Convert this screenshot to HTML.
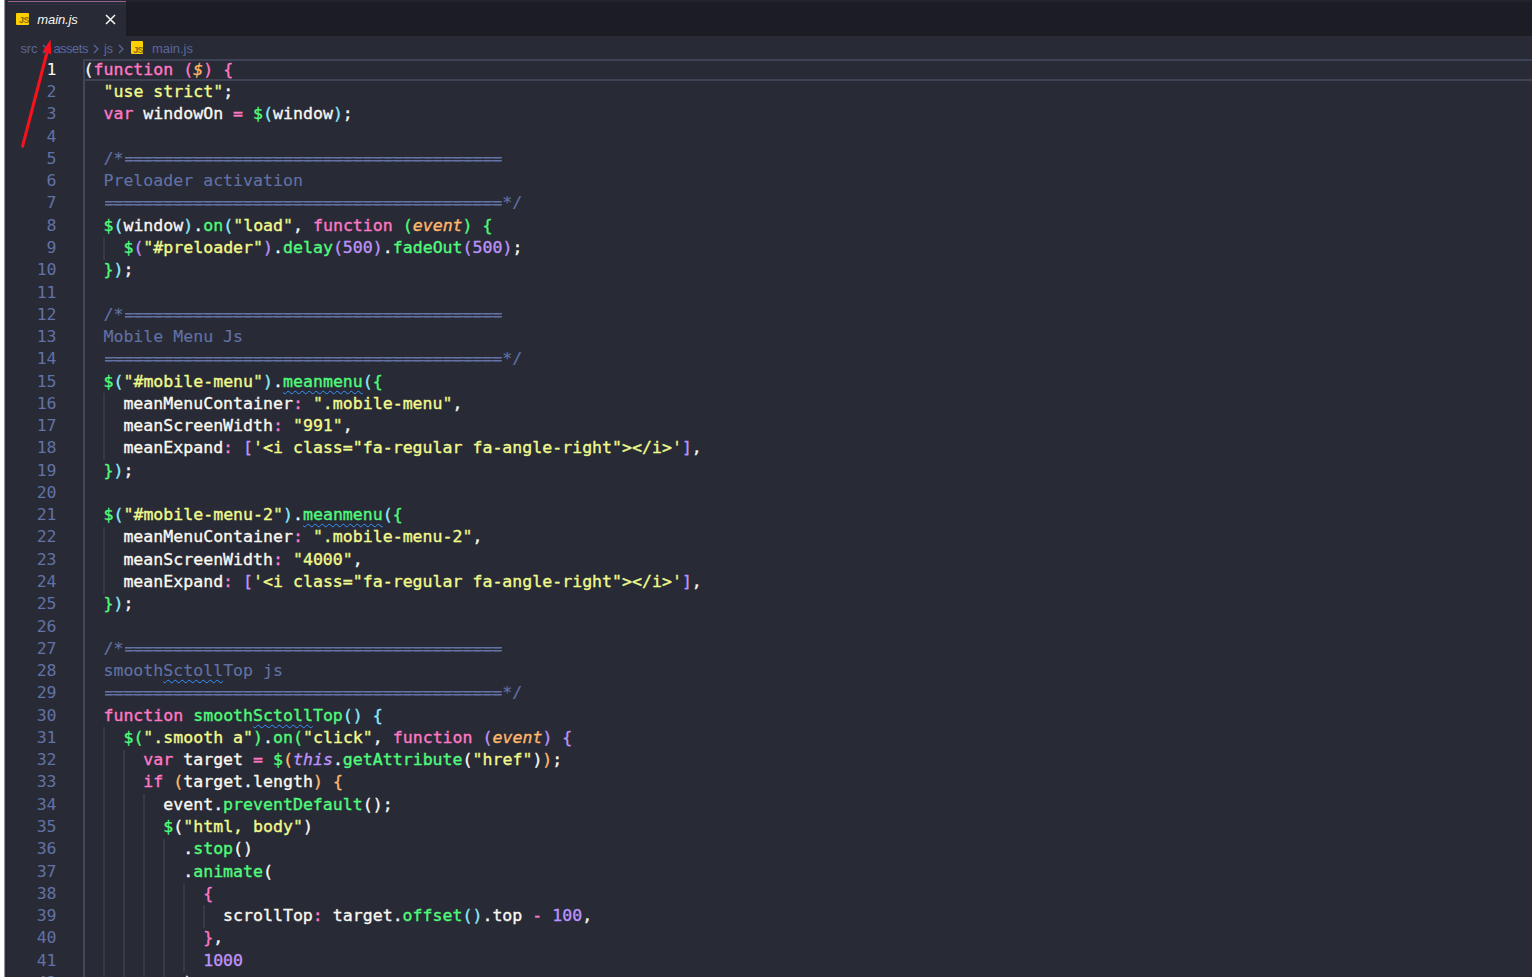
<!DOCTYPE html>
<html lang="en"><head><meta charset="utf-8"><title>main.js</title>
<style>
html,body{margin:0;padding:0}
body{width:1532px;height:977px;overflow:hidden;background:#282a36;position:relative;font-family:"Liberation Sans",sans-serif}
.edge{position:absolute;left:0;top:0;width:4px;height:977px;background:#fff}
.edge2{position:absolute;left:4px;top:0;width:3px;height:977px;background:linear-gradient(90deg,#8d8d95 0 1px,#393941 1px 2px,#22222c 2px 3px)}
.tabs{position:absolute;left:8px;top:0;right:0;height:35.5px;background:#1b1c24}
.tabs:before{content:"";position:absolute;left:0;right:0;top:0;height:3px;background:linear-gradient(#24252f,#1b1c24)}
.tab{position:absolute;left:0;top:0;width:118px;height:35.5px;background:#282a36}
.tab .tl{position:absolute;left:0;right:0;top:0;height:6.2px;background:linear-gradient(#1f2530 0,#222e38 30%,#222e38 80%,#282a36 100%)}
.tab .bt{position:absolute;left:0;right:0;top:0.9px;height:1.3px;background:#a0608a}
.tab .bt2{position:absolute;left:0;right:0;top:3.8px;height:1.2px;background:#3c2a44}
.tab .lbl{position:absolute;left:29.3px;top:11.7px;font-size:13px;line-height:16px;font-style:italic;color:#f8f8f2;letter-spacing:-0.1px}
.jsico{position:absolute;background:#fbd100;border-radius:1px;overflow:hidden}
.jsico span{position:absolute;right:0.3px;bottom:0.2px;font:bold 9px/9px "Liberation Sans",sans-serif;color:#8a6a10;letter-spacing:-0.6px}
.close{position:absolute;left:97px;top:13.6px;width:11px;height:11px}
.crumbs{position:absolute;left:0;top:35.5px;width:1532px;height:23.5px;color:#5a679c;font-size:13px;line-height:16px}
.crumbs span{position:absolute;top:5.2px;white-space:pre}
.crumbs svg{position:absolute}
.ln{position:absolute;left:8px;width:48.6px;text-align:right;color:#6272a4;font:16.57px/22.27px "DejaVu Sans Mono","Liberation Mono",monospace;height:22.27px;white-space:pre}
.ln.act{color:#f8f8f2}
.cl{position:absolute;left:83.5px;height:22.27px;white-space:pre;color:#f8f8f2;font:16.57px/22.27px "DejaVu Sans Mono","Liberation Mono",monospace;font-variant-ligatures:none;-webkit-text-stroke:0.35px}
.hl{position:absolute;left:83.2px;right:-4px;top:58.80px;height:22.42px;box-sizing:border-box;border:2px solid #3f4254}
.g{position:absolute;width:1.5px;background:#373947}
.g.a{background:#434559}
.k{color:#ff79c6}.f{color:#50fa7b}.n{color:#bd93f9}.c,.ceq{color:#6272a4}.c{-webkit-text-stroke:0.12px}.ceq{display:inline-block;clip-path:inset(0 0.5px 0 1.6px);text-shadow:1px 0 0 #6272a4,-1px 0 0 #6272a4;-webkit-text-stroke:0}
.p{color:#ffb86c;font-style:italic}.th{color:#bd93f9;font-style:italic}
.s{color:#f1fa8c}.q{color:#e9f284}
.b0{color:#f8f8f2}.b1{color:#ff79c6}.b2{color:#8be9fd}.b3{color:#50fa7b}.b4{color:#bd93f9}.b5{color:#ffb86c}
.sqg{text-decoration:underline wavy #3794ff;text-decoration-thickness:1.2px;text-underline-offset:3px;text-decoration-skip-ink:none}
</style></head><body>
<div class="edge"></div><div class="edge2"></div>
<div class="tabs"><div class="tab"><div class="tl"></div><div class="bt"></div><div class="bt2"></div>
<div class="jsico" style="left:8.2px;top:12.8px;width:13px;height:12.4px"><span>JS</span></div>
<div class="lbl">main.js</div>
<svg class="close" viewBox="0 0 11 11"><path d="M1 1L10 10M10 1L1 10" stroke="#f8f8f2" stroke-width="1.5" fill="none"/></svg>
</div></div>
<div class="crumbs">
<span style="left:20.5px;letter-spacing:-0.2px">src</span>
<svg style="left:42.4px;top:8.2px" width="6" height="10" viewBox="0 0 6 10"><path d="M1 1L5 5L1 9" stroke="#5a6698" stroke-width="1.3" fill="none"/></svg>
<span style="left:53.4px;letter-spacing:-0.5px">assets</span>
<svg style="left:92.9px;top:8.2px" width="6" height="10" viewBox="0 0 6 10"><path d="M1 1L5 5L1 9" stroke="#5a6698" stroke-width="1.3" fill="none"/></svg>
<span style="left:104px;letter-spacing:-0.3px">js</span>
<svg style="left:117.7px;top:8.2px" width="6" height="10" viewBox="0 0 6 10"><path d="M1 1L5 5L1 9" stroke="#5a6698" stroke-width="1.3" fill="none"/></svg>
<div class="jsico" style="left:131.3px;top:5px;width:12px;height:13.6px"><span>JS</span></div>
<span style="left:152px;letter-spacing:-0.05px">main.js</span>
</div>
<div class="hl"></div>

<div class="g a" style="left:83.40px;top:81.47px;height:913.07px"></div>
<div class="g" style="left:103.35px;top:237.36px;height:22.27px"></div>
<div class="g" style="left:103.35px;top:393.25px;height:66.81px"></div>
<div class="g" style="left:103.35px;top:526.87px;height:66.81px"></div>
<div class="g" style="left:103.35px;top:727.30px;height:267.24px"></div>
<div class="g" style="left:123.30px;top:749.57px;height:244.97px"></div>
<div class="g" style="left:143.26px;top:794.11px;height:200.43px"></div>
<div class="g" style="left:163.21px;top:838.65px;height:155.89px"></div>
<div class="g" style="left:183.16px;top:883.19px;height:89.08px"></div>
<div class="g" style="left:203.11px;top:905.46px;height:22.27px"></div>
<div class="ln act" style="top:58.80px">1</div>
<div class="cl" style="top:58.80px"><span class="b0">(</span><span class="k">function</span> <span class="b1">(</span><span class="p">$</span><span class="b1">)</span> <span class="b1">{</span></div>
<div class="ln" style="top:81.07px">2</div>
<div class="cl" style="top:81.07px">  <span class="q">"</span><span class="s">use strict</span><span class="q">"</span>;</div>
<div class="ln" style="top:103.34px">3</div>
<div class="cl" style="top:103.34px">  <span class="k">var</span> windowOn <span class="k">=</span> <span class="f">$</span><span class="b2">(</span>window<span class="b2">)</span>;</div>
<div class="ln" style="top:125.61px">4</div>
<div class="ln" style="top:147.88px">5</div>
<div class="cl" style="top:147.88px">  <span class="c">/*</span><span class="ceq">======================================</span></div>
<div class="ln" style="top:170.15px">6</div>
<div class="cl" style="top:170.15px">  <span class="c">Preloader activation</span></div>
<div class="ln" style="top:192.42px">7</div>
<div class="cl" style="top:192.42px">  <span class="ceq">========================================</span><span class="c">*/</span></div>
<div class="ln" style="top:214.69px">8</div>
<div class="cl" style="top:214.69px">  <span class="f">$</span><span class="b2">(</span>window<span class="b2">)</span>.<span class="f">on</span><span class="b2">(</span><span class="q">"</span><span class="s">load</span><span class="q">"</span>, <span class="k">function</span> <span class="b3">(</span><span class="p">event</span><span class="b3">)</span> <span class="b3">{</span></div>
<div class="ln" style="top:236.96px">9</div>
<div class="cl" style="top:236.96px">    <span class="f">$</span><span class="b4">(</span><span class="q">"</span><span class="s">#preloader</span><span class="q">"</span><span class="b4">)</span>.<span class="f">delay</span><span class="b4">(</span><span class="n">500</span><span class="b4">)</span>.<span class="f">fadeOut</span><span class="b4">(</span><span class="n">500</span><span class="b4">)</span>;</div>
<div class="ln" style="top:259.23px">10</div>
<div class="cl" style="top:259.23px">  <span class="b3">}</span><span class="b2">)</span>;</div>
<div class="ln" style="top:281.50px">11</div>
<div class="ln" style="top:303.77px">12</div>
<div class="cl" style="top:303.77px">  <span class="c">/*</span><span class="ceq">======================================</span></div>
<div class="ln" style="top:326.04px">13</div>
<div class="cl" style="top:326.04px">  <span class="c">Mobile Menu Js</span></div>
<div class="ln" style="top:348.31px">14</div>
<div class="cl" style="top:348.31px">  <span class="ceq">========================================</span><span class="c">*/</span></div>
<div class="ln" style="top:370.58px">15</div>
<div class="cl" style="top:370.58px">  <span class="f">$</span><span class="b2">(</span><span class="q">"</span><span class="s">#mobile-menu</span><span class="q">"</span><span class="b2">)</span>.<span class="f sqg">meanmenu</span><span class="b2">(</span><span class="b3">{</span></div>
<div class="ln" style="top:392.85px">16</div>
<div class="cl" style="top:392.85px">    meanMenuContainer<span class="k">:</span> <span class="q">"</span><span class="s">.mobile-menu</span><span class="q">"</span>,</div>
<div class="ln" style="top:415.12px">17</div>
<div class="cl" style="top:415.12px">    meanScreenWidth<span class="k">:</span> <span class="q">"</span><span class="s">991</span><span class="q">"</span>,</div>
<div class="ln" style="top:437.39px">18</div>
<div class="cl" style="top:437.39px">    meanExpand<span class="k">:</span> <span class="b4">[</span><span class="q">'</span><span class="s">&lt;i class="fa-regular fa-angle-right"&gt;&lt;/i&gt;</span><span class="q">'</span><span class="b4">]</span>,</div>
<div class="ln" style="top:459.66px">19</div>
<div class="cl" style="top:459.66px">  <span class="b3">}</span><span class="b2">)</span>;</div>
<div class="ln" style="top:481.93px">20</div>
<div class="ln" style="top:504.20px">21</div>
<div class="cl" style="top:504.20px">  <span class="f">$</span><span class="b2">(</span><span class="q">"</span><span class="s">#mobile-menu-2</span><span class="q">"</span><span class="b2">)</span>.<span class="f sqg">meanmenu</span><span class="b2">(</span><span class="b3">{</span></div>
<div class="ln" style="top:526.47px">22</div>
<div class="cl" style="top:526.47px">    meanMenuContainer<span class="k">:</span> <span class="q">"</span><span class="s">.mobile-menu-2</span><span class="q">"</span>,</div>
<div class="ln" style="top:548.74px">23</div>
<div class="cl" style="top:548.74px">    meanScreenWidth<span class="k">:</span> <span class="q">"</span><span class="s">4000</span><span class="q">"</span>,</div>
<div class="ln" style="top:571.01px">24</div>
<div class="cl" style="top:571.01px">    meanExpand<span class="k">:</span> <span class="b4">[</span><span class="q">'</span><span class="s">&lt;i class="fa-regular fa-angle-right"&gt;&lt;/i&gt;</span><span class="q">'</span><span class="b4">]</span>,</div>
<div class="ln" style="top:593.28px">25</div>
<div class="cl" style="top:593.28px">  <span class="b3">}</span><span class="b2">)</span>;</div>
<div class="ln" style="top:615.55px">26</div>
<div class="ln" style="top:637.82px">27</div>
<div class="cl" style="top:637.82px">  <span class="c">/*</span><span class="ceq">======================================</span></div>
<div class="ln" style="top:660.09px">28</div>
<div class="cl" style="top:660.09px">  <span class="c">smooth</span><span class="c sqg">Sctoll</span><span class="c">Top js</span></div>
<div class="ln" style="top:682.36px">29</div>
<div class="cl" style="top:682.36px">  <span class="ceq">========================================</span><span class="c">*/</span></div>
<div class="ln" style="top:704.63px">30</div>
<div class="cl" style="top:704.63px">  <span class="k">function</span> <span class="f">smooth</span><span class="f sqg">Sctoll</span><span class="f">Top</span><span class="b2">()</span> <span class="b2">{</span></div>
<div class="ln" style="top:726.90px">31</div>
<div class="cl" style="top:726.90px">    <span class="f">$</span><span class="b3">(</span><span class="q">"</span><span class="s">.smooth a</span><span class="q">"</span><span class="b3">)</span>.<span class="f">on</span><span class="b3">(</span><span class="q">"</span><span class="s">click</span><span class="q">"</span>, <span class="k">function</span> <span class="b4">(</span><span class="p">event</span><span class="b4">)</span> <span class="b4">{</span></div>
<div class="ln" style="top:749.17px">32</div>
<div class="cl" style="top:749.17px">      <span class="k">var</span> target <span class="k">=</span> <span class="f">$</span><span class="b5">(</span><span class="th">this</span>.<span class="f">getAttribute</span><span class="b0">(</span><span class="q">"</span><span class="s">href</span><span class="q">"</span><span class="b0">)</span><span class="b5">)</span>;</div>
<div class="ln" style="top:771.44px">33</div>
<div class="cl" style="top:771.44px">      <span class="k">if</span> <span class="b5">(</span>target.length<span class="b5">)</span> <span class="b5">{</span></div>
<div class="ln" style="top:793.71px">34</div>
<div class="cl" style="top:793.71px">        event.<span class="f">preventDefault</span><span class="b0">()</span>;</div>
<div class="ln" style="top:815.98px">35</div>
<div class="cl" style="top:815.98px">        <span class="f">$</span><span class="b0">(</span><span class="q">"</span><span class="s">html, body</span><span class="q">"</span><span class="b0">)</span></div>
<div class="ln" style="top:838.25px">36</div>
<div class="cl" style="top:838.25px">          .<span class="f">stop</span><span class="b0">()</span></div>
<div class="ln" style="top:860.52px">37</div>
<div class="cl" style="top:860.52px">          .<span class="f">animate</span><span class="b0">(</span></div>
<div class="ln" style="top:882.79px">38</div>
<div class="cl" style="top:882.79px">            <span class="b1">{</span></div>
<div class="ln" style="top:905.06px">39</div>
<div class="cl" style="top:905.06px">              scrollTop<span class="k">:</span> target.<span class="f">offset</span><span class="b2">()</span>.top <span class="k">-</span> <span class="n">100</span>,</div>
<div class="ln" style="top:927.33px">40</div>
<div class="cl" style="top:927.33px">            <span class="b1">}</span>,</div>
<div class="ln" style="top:949.60px">41</div>
<div class="cl" style="top:949.60px">            <span class="n">1000</span></div>
<div class="ln" style="top:971.87px">42</div>
<div class="cl" style="top:971.87px">          <span class="b0">)</span>;</div>
<svg style="position:absolute;left:0;top:0" width="80" height="160" viewBox="0 0 80 160"><path d="M22.6 146.2L47.4 51" stroke="#f6121d" stroke-width="3.1" stroke-linecap="round" fill="none"/><path d="M50.6 39.6L43 50.8L51.3 54.6Z" fill="#f6121d"/></svg>
</body></html>
